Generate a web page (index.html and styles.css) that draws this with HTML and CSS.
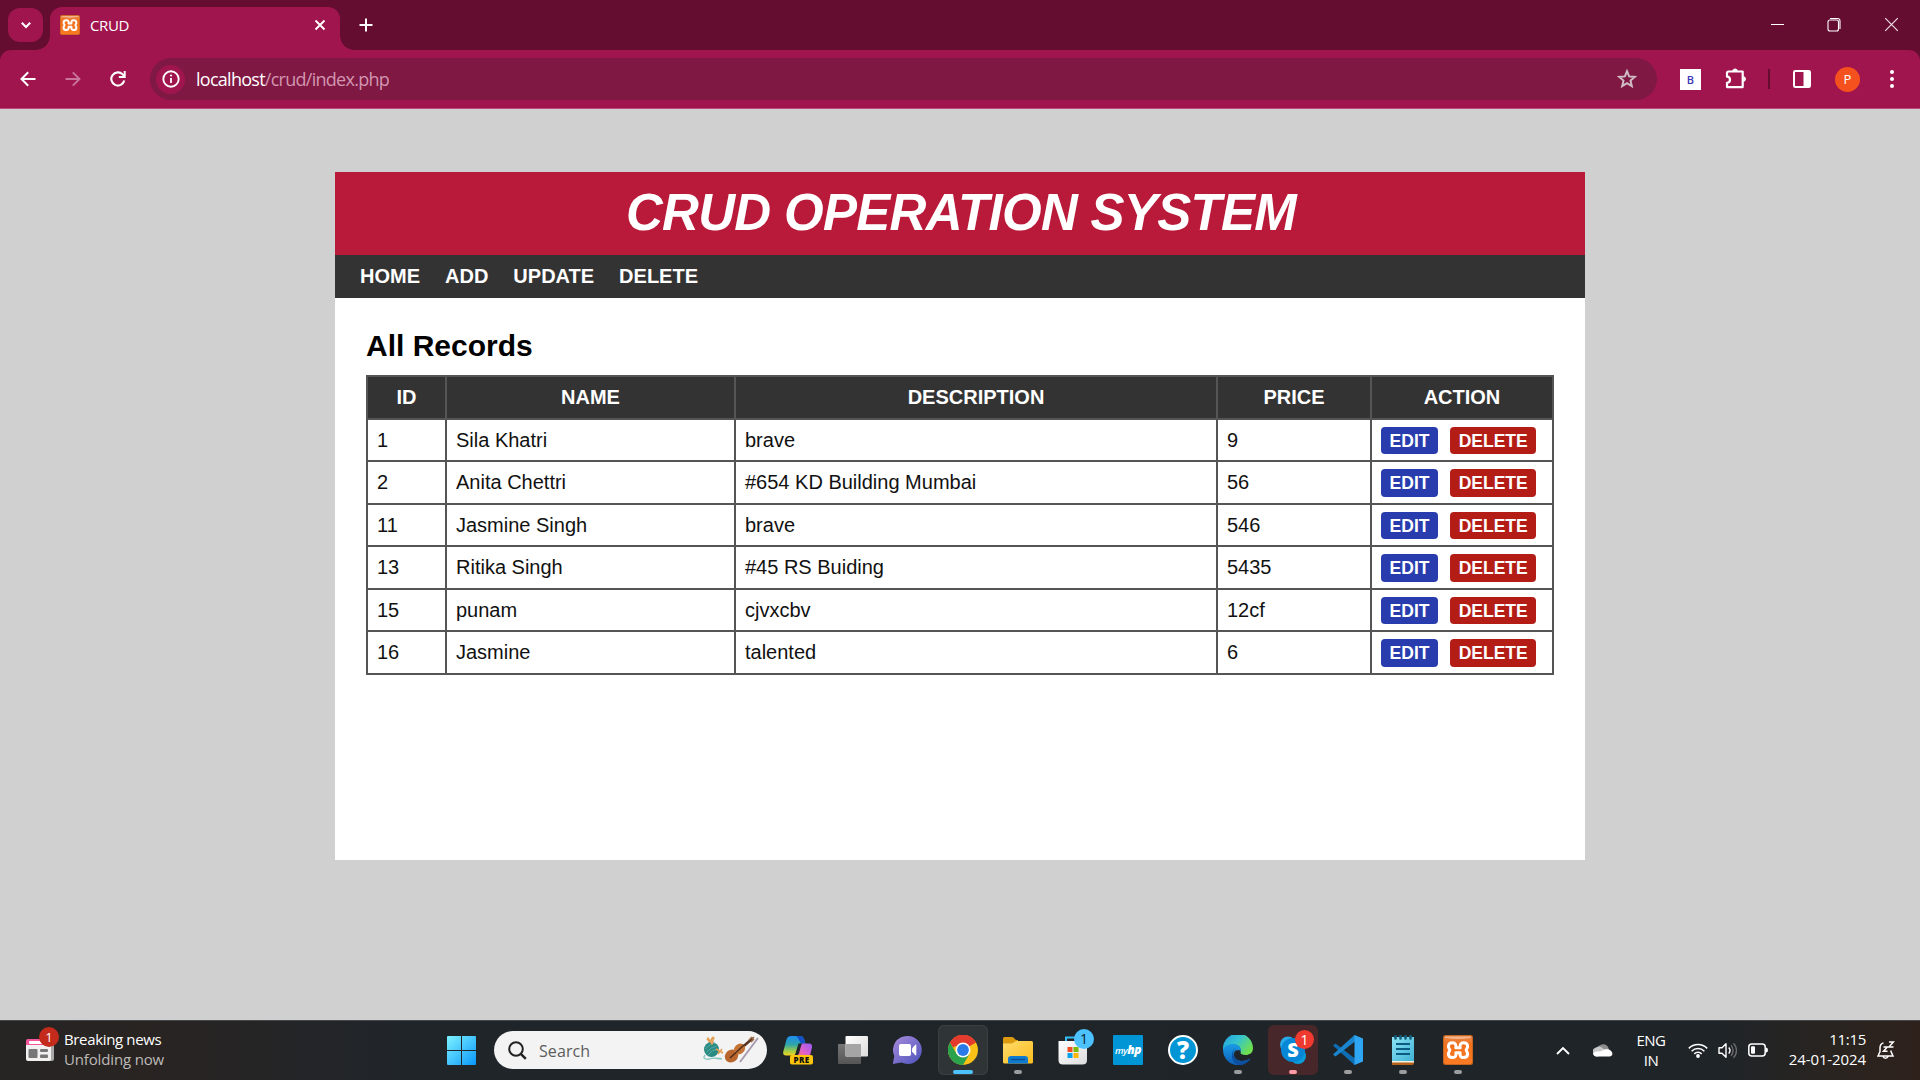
FILE: index.html
```html
<!DOCTYPE html>
<html lang="en">
<head>
<meta charset="utf-8">
<title>CRUD</title>
<link rel="stylesheet" href="styles.css">
</head>
<body>
<svg class="defs" width="0" height="0" aria-hidden="true">
  <defs>
    <linearGradient id="g-win" x1="0" y1="0" x2="1" y2="1"><stop offset="0" stop-color="#7df3ff"/><stop offset="1" stop-color="#0a96fb"/></linearGradient>
    <linearGradient id="g-orange" x1="0" y1="0" x2="0" y2="1"><stop offset="0" stop-color="#e98a4a"/><stop offset=".3" stop-color="#f0701c"/><stop offset="1" stop-color="#fb7a24"/></linearGradient>
    <linearGradient id="g-cop1" x1="0" y1="0" x2="0" y2="1"><stop offset="0" stop-color="#1c8ef0"/><stop offset=".45" stop-color="#2fa5a8"/><stop offset=".75" stop-color="#9ccb4a"/><stop offset="1" stop-color="#f4d420"/></linearGradient>
    <linearGradient id="g-cop2" x1="1" y1="0" x2="0" y2="1"><stop offset="0" stop-color="#9b5cf5"/><stop offset=".5" stop-color="#d95fd0"/><stop offset="1" stop-color="#ff7a6a"/></linearGradient>
    <linearGradient id="g-chat" x1="0" y1="0" x2="1" y2="1"><stop offset="0" stop-color="#a98bdc"/><stop offset="1" stop-color="#4b53bc"/></linearGradient>
    <linearGradient id="g-fold" x1="0" y1="0" x2="1" y2="1"><stop offset="0" stop-color="#ffdc6b"/><stop offset="1" stop-color="#fbbc1e"/></linearGradient>
    <linearGradient id="g-edge1" x1="0" y1="0" x2="1" y2=".6"><stop offset="0" stop-color="#1f9be0"/><stop offset=".5" stop-color="#35c4d0"/><stop offset="1" stop-color="#6fe04f"/></linearGradient>
    <linearGradient id="g-edge2" x1="0" y1="0" x2="0" y2="1"><stop offset="0" stop-color="#1a9de6"/><stop offset="1" stop-color="#0d5db8"/></linearGradient>
    <linearGradient id="g-note" x1="0" y1="0" x2="1" y2="1"><stop offset="0" stop-color="#8ce4f4"/><stop offset="1" stop-color="#3fb2d4"/></linearGradient>
    <linearGradient id="g-white" x1="0" y1="0" x2="1" y2="1"><stop offset="0" stop-color="#fff"/><stop offset="1" stop-color="#dcdcdc"/></linearGradient>
    <linearGradient id="g-gray" x1="0" y1="0" x2="0" y2="1"><stop offset="0" stop-color="#777"/><stop offset="1" stop-color="#555"/></linearGradient>
    <symbol id="xampp" viewBox="0 0 30 30">
      <rect width="30" height="30" rx="2.5" fill="#c4641d"/>
      <rect x="1" y="1" width="28" height="28" rx="2" fill="url(#g-orange)"/>
      <path d="M2 1.600h26v1.200q-13 2.400-26 0z" fill="#f2b48c"/>
      <path d="M15 12.800H12.800C13.600 9.500 12 7.800 9.800 7.800C7 7.800 5.400 9.300 5.400 11.500C5.400 13.300 6.800 13.800 6.800 15C6.800 16.300 5.400 17 5.400 19C5.400 21.300 7 22.600 9.500 22.600C12 22.600 13.600 20.800 12.800 17.800H17.200C16.400 20.800 18 22.600 20.500 22.600C23 22.600 24.600 21.300 24.600 19C24.600 17 23.200 16.300 23.200 15C23.200 13.800 24.600 13.300 24.600 11.500C24.600 9.300 23 7.800 20.200 7.800C18 7.800 16.400 9.500 17.200 12.800z" fill="none" stroke="#fff" stroke-width="3" stroke-linejoin="round"/>
    </symbol>
  </defs>
</svg>

<header class="browser">
  <div class="tabstrip">
    <button class="tab-search" aria-label="Search tabs"><svg width="12" height="12" viewBox="0 0 12 12"><path d="M1.800 3.700 6 8l4.200-4.300" fill="none" stroke="#fff" stroke-width="2"/></svg></button>
    <div class="tab">
      <svg class="favicon" width="20" height="20"><use href="#xampp"/></svg>
      <span class="tab-title">CRUD</span>
      <svg class="tab-close" width="12" height="12" viewBox="0 0 12 12"><path d="M1.500 1.500l9 9M10.500 1.500l-9 9" stroke="#fff" stroke-width="1.900"/></svg>
    </div>
    <svg class="new-tab" width="14" height="14" viewBox="0 0 14 14"><path d="M7 .5v13M.5 7h13" stroke="#fff" stroke-width="2"/></svg>
    <div class="window-controls">
      <svg width="15" height="15" viewBox="0 0 15 15"><path d="M1 7.500h13" stroke="#fff"/></svg>
      <svg width="15" height="15" viewBox="0 0 15 15"><rect x="1" y="3" width="10.500" height="11" rx="2" fill="none" stroke="#fff" stroke-width="1.100"/><path d="M3 1.500h7.500q2.500 0 2.500 2.500v8" fill="none" stroke="#fff" stroke-width="1.100"/></svg>
      <svg width="15" height="15" viewBox="0 0 15 15"><path d="M1.200 1.200l12.600 12.600M13.800 1.200L1.200 13.800" stroke="#f0dde5" stroke-width="1.200"/></svg>
    </div>
  </div>
  <div class="toolbar">
    <div class="nav-buttons">
      <svg width="16" height="16" viewBox="0 0 16 16"><path d="M15.500 8H2M8.200 1.300 1.500 8l6.700 6.700" fill="none" stroke="#fff" stroke-width="2"/></svg>
      <svg width="16" height="16" viewBox="0 0 16 16"><path d="M.5 8H14M7.800 1.300 14.500 8l-6.700 6.700" fill="none" stroke="#c9759a" stroke-width="1.900"/></svg>
      <svg width="16" height="16" viewBox="0 0 16 16"><path d="M14.300 9.600A6.600 6.600 0 1 1 12.700 3.400L14.500 5.300" fill="none" stroke="#fff" stroke-width="2.100"/><path d="M15.700 0v7H8.800V5h4.900V0z" fill="#fff"/></svg>
    </div>
    <div class="omnibox">
      <span class="site-info"><svg width="18" height="18" viewBox="0 0 18 18"><circle cx="9" cy="9" r="7.700" fill="none" stroke="#fff" stroke-width="1.900"/><path d="M9 8v5" stroke="#fff" stroke-width="1.800"/><circle cx="9" cy="5.500" r="1.100" fill="#fff"/></svg></span>
      <span class="url"><b>localhost</b>/crud/index.php</span>
      <svg class="star" width="20" height="20" viewBox="0 0 20 20"><path d="M10 2.200l2.100 5.200 5.700.5-4.300 3.700 1.300 5.500-4.800-2.900-4.800 2.900 1.300-5.500-4.300-3.700 5.700-.5z" fill="none" stroke="#d0bcc5" stroke-width="2"/></svg>
    </div>
    <div class="extensions">
      <span class="ext-b">B</span>
      <svg class="puzzle" width="22" height="22" viewBox="0 0 22 22"><path d="M3.500 3.500h14.200v15.600H2v-4.200c4-.3 4-6 0-6.200V5q0-1.500 1.500-1.500z" fill="none" stroke="#fff" stroke-width="2.200" stroke-linejoin="round"/><path d="M7.300 3c.4-3.400 5.200-3.400 5.600 0zM18.300 8.300c3.500.4 3.500 5.200 0 5.600z" fill="#fff"/></svg>
      <span class="divider"></span>
      <svg class="side-panel" width="18" height="18" viewBox="0 0 18 18"><rect x="1" y="1" width="16" height="16" rx="1.300" fill="none" stroke="#fff" stroke-width="2"/><path d="M10.500 1H17v16h-6.500z" fill="#fff"/></svg>
      <span class="avatar">P</span>
      <svg class="menu" width="4" height="18" viewBox="0 0 4 18"><g fill="#fff"><circle cx="2" cy="2" r="2"/><circle cx="2" cy="9" r="2"/><circle cx="2" cy="16" r="2"/></g></svg>
    </div>
  </div>
</header>

<main class="page">
  <div class="wrapper">
    <h1 class="banner">CRUD OPERATION SYSTEM</h1>
    <nav class="menu-bar"><a>HOME</a><a>ADD</a><a>UPDATE</a><a>DELETE</a></nav>
    <section class="content">
      <h2>All Records</h2>
      <table class="records">
        <colgroup><col class="c-id"><col class="c-name"><col class="c-desc"><col class="c-price"><col class="c-action"></colgroup>
        <thead><tr class="tall"><th>ID</th><th>NAME</th><th>DESCRIPTION</th><th>PRICE</th><th>ACTION</th></tr></thead>
        <tbody>
          <tr><td>1</td><td>Sila Khatri</td><td>brave</td><td>9</td><td><div class="actions"><a class="btn edit">EDIT</a><a class="btn delete">DELETE</a></div></td></tr>
          <tr class="tall"><td>2</td><td>Anita Chettri</td><td>#654 KD Building Mumbai</td><td>56</td><td><div class="actions"><a class="btn edit">EDIT</a><a class="btn delete">DELETE</a></div></td></tr>
          <tr><td>11</td><td>Jasmine Singh</td><td>brave</td><td>546</td><td><div class="actions"><a class="btn edit">EDIT</a><a class="btn delete">DELETE</a></div></td></tr>
          <tr class="tall"><td>13</td><td>Ritika Singh</td><td>#45 RS Buiding</td><td>5435</td><td><div class="actions"><a class="btn edit">EDIT</a><a class="btn delete">DELETE</a></div></td></tr>
          <tr><td>15</td><td>punam</td><td>cjvxcbv</td><td>12cf</td><td><div class="actions"><a class="btn edit">EDIT</a><a class="btn delete">DELETE</a></div></td></tr>
          <tr class="tall"><td>16</td><td>Jasmine</td><td>talented</td><td>6</td><td><div class="actions"><a class="btn edit">EDIT</a><a class="btn delete">DELETE</a></div></td></tr>
        </tbody>
      </table>
    </section>
  </div>
</main>

<footer class="taskbar">
  <div class="news">
    <div class="news-icon">
      <svg width="28" height="22" viewBox="0 0 28 22"><rect x="4" y="2" width="24" height="20" rx="2" fill="#a8a8a8"/><path d="M0 6V2q0-2 2-2h22v6z" fill="#f5559b"/><path d="M0 6h25v14q0 2-2 2H2q-2 0-2-2z" fill="#f1f1f1"/><rect x="3" y="2" width="19" height="3" rx="1" fill="#fff"/><rect x="2.500" y="10" width="9" height="9" rx="1" fill="#777"/><rect x="14" y="10" width="8" height="3" rx="1" fill="#777"/><rect x="14" y="15.500" width="8" height="3.500" rx="1" fill="#777"/></svg>
      <span class="news-badge">1</span>
    </div>
    <div class="news-text"><span>Breaking news</span><span class="sub">Unfolding now</span></div>
  </div>

  <div class="dock">
    <div class="app start"><svg width="29" height="29" viewBox="0 0 29 29"><path d="M1 0h13v14H0V1q0-1 1-1zM15 0h13q1 0 1 1v13H15zM0 15h14v14H1q-1 0-1-1zM15 15h14v13q0 1-1 1H15z" fill="url(#g-win)"/></svg></div>
    <div class="search">
      <svg width="19" height="19" viewBox="0 0 19 19"><circle cx="8" cy="8" r="6.800" fill="none" stroke="#222" stroke-width="2"/><path d="M12.800 12.800l5 5" stroke="#222" stroke-width="2.500"/></svg>
      <span>Search</span>
      <svg class="doodle" width="56" height="30" viewBox="0 0 56 30">
        <path d="M4 3.500 16 18M10 2 3 14" stroke="#e0984a" stroke-width="1.700"/>
        <circle cx="8.500" cy="14.500" r="7.500" fill="#2b8b83"/><path d="M2.500 14q5-6 9.500-5.500M3.500 17q5-5 10-6M5 20q4-6 10-6" fill="none" stroke="#62b8ae" stroke-width=".8"/>
        <path d="M4.500 2.500l5 7M11 2l-2 7M13 14l7 4M15 19l4-5" stroke="#e5a257" stroke-width="1.600"/>
        <path d="M2 20q-3 4 3 4.300 5-1.500 8-1t6 .5" fill="none" stroke="#84c6be" stroke-width="1.400"/>
        <path d="M35 16 50 3" stroke="#59331f" stroke-width="2.600"/><path d="M46 5l3-3M48 7l3-3M49 4l2-2" stroke="#9a6b4a" stroke-width="1.600"/>
        <ellipse cx="28.500" cy="21" rx="7" ry="6.200" transform="rotate(-40 28.500 21)" fill="#b8662d"/><ellipse cx="36.500" cy="14" rx="6" ry="5" transform="rotate(-40 36.500 14)" fill="#c47436"/>
        <path d="M27 23 41 10" stroke="#4e2c1a" stroke-width="1.500"/>
        <path d="M37 27 55 3" stroke="#a698ad" stroke-width="1.800"/>
      </svg>
    </div>

    <div class="apps">
      <div class="app"><svg width="30" height="30" viewBox="0 0 30 30"><path d="M13 1h4q3 0 4 3l1.500 4.500H19q-2.500 0-3.500 2.500l-2.500 7.500Q12 20.500 9 20.500H3q-3.500 0-2.700-4L3.500 4.500Q4.500 1 8 1z" fill="url(#g-cop1)"/><path d="M13 1h4q3 0 4 3l1.500 4.500H18l-2-3.500q-1-3-3-4z" fill="#1450c8"/><path d="M15.500 8.500H20l-4 11.500h-4z" fill="#20252a"/><path d="M19.500 8.500H26q3.500 0 3 4l-2 8-1 2H13l3-4 2-7.500q.5-2.500 1.500-2.500z" fill="url(#g-cop2)"/><rect x="7" y="20" width="23" height="9.500" rx="2" fill="#fcc50a"/></svg><span class="pre">PRE</span></div>
      <div class="app"><svg width="30" height="30" viewBox="0 0 30 30"><rect y="9" width="23" height="20" rx="1" fill="url(#g-gray)"/><rect x="7.500" y="1" width="22.500" height="20.500" rx="1" fill="url(#g-white)"/><path d="M7.500 9H23v12.500H7.500z" fill="#a5a5a5"/></svg></div>
      <div class="app chat"><svg width="30" height="30" viewBox="0 0 30 30"><path d="M15.500 1a14 14 0 1 1-6 26.500L.8 29l1.500-8A14 14 0 0 1 15.500 1z" fill="url(#g-chat)"/><rect x="7" y="9" width="12" height="12" rx="1.800" fill="#fff"/><path d="M20 13.500l3.500-4q.8 0 .8 1v9q0 1-.8 1l-3.500-4z" fill="#fff"/></svg></div>
      <div class="app active"><svg width="30" height="30" viewBox="0 0 30 30"><circle cx="15" cy="15" r="15" fill="#fbc116"/><path d="M15 15 2 7.500A15 15 0 0 1 28 7.500z" fill="#e33b2e"/><path d="M15 7.500h13A15 15 0 0 0 2 7.500l3 5z" fill="#e33b2e"/><path d="M2 7.500A15 15 0 0 0 15 30l6.500-11.200L15 15 8.500 18.700z" fill="#2ba24c"/><circle cx="15" cy="15" r="7.500" fill="#fff"/><circle cx="15" cy="15" r="5.900" fill="#2a7be8"/></svg><i class="bar wide"></i></div>
      <div class="app"><svg width="30" height="30" viewBox="0 0 30 30"><path d="M0 3.500Q0 2 1.500 2H9q1 0 1.700.8L13 5H0z M0 5h15v5H0z" fill="#dc9a0e"/><path d="M0 8.500h9l4-2.500h15.500Q30 6 30 7.500v19.500q0 1.500-1.500 1.500h-27Q0 28.500 0 27z" fill="url(#g-fold)"/><path d="M5 28.500V24q0-3 3-3h14q3 0 3 3v4.500z" fill="#0f7bd0"/><path d="M8.500 24.500h13" stroke="#0a4f93" stroke-width="1.300" stroke-linecap="round"/></svg><i class="bar"></i></div>
      <div class="app"><svg width="30" height="30" viewBox="0 0 30 30"><path d="M8 9V2.500h14V9" fill="none" stroke="#33bdf5" stroke-width="2"/><path d="M.5 6H29v19q0 4.500-4.500 4.500H5Q.5 29.500.5 25z" fill="url(#g-white)"/><path d="M9.500 12h5v5h-5z" fill="#f04e23"/><path d="M15.500 12h5v5h-5z" fill="#7db90c"/><path d="M9.500 18h5v5h-5z" fill="#06a3ec"/><path d="M15.500 18h5v5h-5z" fill="#fdb70c"/></svg><span class="badge blue">1</span></div>
      <div class="app"><span class="myhp">my<b>hp</b></span></div>
      <div class="app"><span class="help">?</span></div>
      <div class="app"><svg width="30" height="30" viewBox="0 0 30 30"><path d="M0 14A15 15 0 0 1 30 13C30 18 26.500 20 22.500 20c-3.500 0-6-1-5-3C18.500 13 15.500 9.500 11 9.500 6 9.500 2 12 0 15z" fill="url(#g-edge1)"/><path d="M0 15.500C.5 11 5.500 8.500 11 9c5 .5 8 4 6.500 8C13 13 10.500 17 11 20.500 12 26 20 28 27.500 23.500A15 15 0 0 1 0 15.500z" fill="url(#g-edge2)"/><path d="M13.500 12.500Q9 15 10.500 20.500C12.500 26.500 20 27.500 27.500 23.500 25 28 20 30 15.500 30 8 28.500 6.500 15.500 13.500 12.500z" fill="#0d50a0"/><path d="M15.500 15q2 0 2 2-.5 2 1 3.500 4 3 9 .5l.5 1.500q-8 3.500-12.500-1-2-3.500 0-6.500z" fill="#20252a"/></svg><i class="bar"></i></div>
      <div class="app alert"><svg width="30" height="30" viewBox="0 0 30 30"><circle cx="10" cy="9.500" r="8" fill="#2aaae8"/><circle cx="20" cy="21" r="8" fill="#0a9bd8"/><circle cx="15" cy="15" r="12" fill="#0787d6"/></svg><span class="skype">S</span><span class="badge red">1</span><i class="bar pink"></i></div>
      <div class="app"><svg width="30" height="30" viewBox="0 0 30 30"><path d="M0 10.500 2.500 8.500 22 23.500V30h-.5z" fill="#0f6db3"/><path d="M0 19.500 2.500 21.500 22 6.500V0h-.5z" fill="#1a86cf"/><path d="M21.500 0 30 3.500v23L21.500 30z" fill="#2fa6f4"/></svg><i class="bar"></i></div>
      <div class="app"><svg width="30" height="30" viewBox="0 0 30 30"><path d="M4 24h22v4q0 2-2 2H4z" fill="#b5621c"/><path d="M4 26h22v1.500H4z" fill="#f5efe4"/><path d="M4 2h22v24H4z" fill="url(#g-note)"/><path d="M8 9h14M8 14h14M8 19h14" stroke="#0b5a80" stroke-width="1.900"/><path d="M7.500 1v2.500M12.500 1v2.500M17.500 1v2.500M22.500 1v2.500" stroke="#125d7c" stroke-width="2.600" stroke-linecap="round"/></svg><i class="bar"></i></div>
      <div class="app"><svg width="30" height="30"><use href="#xampp"/></svg><i class="bar"></i></div>
    </div>
  </div>

  <div class="tray">
    <svg width="14" height="9" viewBox="0 0 14 9"><path d="M1 8l6-6 6 6" fill="none" stroke="#fff" stroke-width="1.900"/></svg>
    <svg class="cloud" width="20" height="14" viewBox="0 0 20 14"><path d="M4 7a6 6 0 0 1 11.500-2L17 9z" fill="#8d8d8d"/><path d="M4.500 13.500A4.500 4.500 0 0 1 2 5q4-3 7.500 0l7 5z" fill="#c9c9c9"/><path d="M3.500 13.500Q0 13 .5 10 3 7.500 7 8.500L13 6q4 0 5.500 2.500 2.500 3.500-1.500 5z" fill="#fff"/></svg>
    <div class="lang"><span>ENG</span><span>IN</span></div>
    <div class="status">
      <svg width="20" height="16" viewBox="0 0 20 16"><g fill="none" stroke="#fff" stroke-width="1.500"><path d="M.8 6.400a13 13 0 0 1 18.400 0M3.600 9.200a9 9 0 0 1 12.800 0M6.300 11.900a5.200 5.200 0 0 1 7.400 0"/></g><circle cx="10" cy="14" r="1.900" fill="#fff"/></svg>
      <svg width="20" height="17" viewBox="0 0 20 17"><path d="M1 5.700h3l4-4v13.600l-4-4H1z" fill="none" stroke="#fff" stroke-width="1.400" stroke-linejoin="round"/><path d="M10.700 5.500a4.500 4.500 0 0 1 0 6" fill="none" stroke="#fff" stroke-width="1.400"/><path d="M13 3.300a7.500 7.500 0 0 1 0 10.400M15.500 1.200a10.500 10.500 0 0 1 0 14.600" fill="none" stroke="#6b6e70" stroke-width="1.300"/></svg>
      <svg width="20" height="14" viewBox="0 0 20 14"><rect x=".8" y="1" width="16.400" height="12" rx="3" fill="none" stroke="#fff" stroke-width="1.500"/><rect x="3" y="3.200" width="4" height="7.600" rx="1" fill="#fff"/><path d="M18 4.500q2 0 2 2.500t-2 2.500z" fill="#fff"/></svg>
    </div>
    <div class="clock"><span>11:15</span><span class="date">24-01-2024</span></div>
    <svg class="bell" width="18" height="20" viewBox="0 0 18 20"><path d="M6.500 2.900Q3 4 3 8v3.500L1 16h15l-2-4.500V10.500M6 16.500a2.700 2.700 0 0 0 5 0" fill="none" stroke="#fff" stroke-width="1.500"/><path d="M6.500 7h3.800l-3.800 4.300h4M12 2h4.300L12 7h4.500" fill="none" stroke="#fff" stroke-width="1.500"/></svg>
  </div>
</footer>
</body>
</html>
```
FILE: styles.css
```css
* { box-sizing: border-box; }
html, body { margin: 0; height: 100%; }
body {
  display: flex;
  flex-direction: column;
  height: 1080px;
  overflow: hidden;
  background: #d0d0d0;
  font-family: "Liberation Sans", Arial, sans-serif;
}
svg { display: block; flex: none; }
.defs { position: absolute; }

/* Browser chrome */
.browser { flex: none; background: #640d31; font-family: "Open Sans", "Noto Sans", sans-serif; color: #fff; }
.tabstrip { display: flex; height: 50px; padding: 7px 0 0 8px; align-items: flex-start; }
.tab-search {
  display: flex; align-items: center; justify-content: center;
  width: 35px; height: 34px; margin: 1px 7px 0 0; padding: 0;
  border: 0; border-radius: 12px; background: #a0154e;
}
.tab {
  position: relative; display: flex; align-items: center;
  width: 290px; height: 43px; padding: 0 14px 7px 10px;
  border-radius: 12px 12px 0 0; background: #a0154e;
}
.tab::before, .tab::after { content: ""; position: absolute; bottom: 0; width: 14px; height: 14px; }
.tab::before { left: -14px; background: radial-gradient(circle at 0 0, transparent 13.500px, #a0154e 14px); }
.tab::after { right: -14px; background: radial-gradient(circle at 100% 0, transparent 13.500px, #a0154e 14px); }
.tab-title { margin-left: 10px; font-size: 15px; letter-spacing: -.4px; flex: 1; }
.new-tab { margin: 11px 0 0 19px; }
.window-controls { display: flex; gap: 42px; margin: 10px 21px 0 auto; }
.toolbar {
  display: flex; align-items: center; height: 59px; padding: 0 21px 0 20px;
  border-radius: 11px 11px 0 0; border-bottom: 1px solid #bd4a78; background: #a0154e;
}
.nav-buttons { display: flex; gap: 29px; margin-right: 24px; }
.omnibox { display: flex; align-items: center; width: 1507px; height: 42px; padding: 0 20px 0 6px; border-radius: 21px; background: #7f1843; }
.site-info { display: flex; align-items: center; justify-content: center; width: 29px; height: 29px; border-radius: 50%; background: #a0154e; }
.url { flex: 1; margin-left: 11px; color: #d296b0; font-size: 18px; letter-spacing: -.73px; }
.url b { color: #fff; font-weight: 400; }
.extensions { display: flex; align-items: center; flex: 1; }
.ext-b {
  display: flex; align-items: center; justify-content: center; width: 21px; height: 21px; margin-left: 23px;
  background: #fff; color: #3a35b4; font-size: 11px; font-weight: 600;
}
.puzzle { margin-left: 24px; }
.divider { width: 2px; height: 20px; margin-left: 21px; background: #640d31; }
.side-panel { margin-left: 23px; }
.avatar {
  display: flex; align-items: center; justify-content: center; width: 25px; height: 25px; margin-left: 24px;
  border-radius: 50%; background: #f4511e; font-size: 13px;
}
.extensions .menu { margin-left: 30px; }

/* Web page */
.page { flex: 1; padding-top: 63px; }
.wrapper { width: 1250px; height: 688px; margin: 0 auto; background: #fff; }
.banner {
  margin: 0; height: 83px; padding-left: 2px; background: #ba1a39; color: #fff;
  font-size: 51px; font-style: italic; line-height: 82px; letter-spacing: -.7px; text-align: center;
}
.menu-bar { display: flex; gap: 25px; height: 43px; padding: 0 25px; background: #333; color: #fff; font-size: 20px; font-weight: 700; line-height: 42px; }
.content { padding: 30px 31px 0; }
.content h2 { margin: 0 0 12px; font-size: 30px; line-height: 35px; color: #000; }
.records { width: 1188px; border-collapse: collapse; table-layout: fixed; font-size: 20px; line-height: 24px; color: #111; }
.records th, .records td { padding: 0 9px; border: 2px solid #555; text-align: left; }
.records th { background: #333; color: #fff; text-align: center; }
.records .tall th, .records .tall td { padding-bottom: 2px; }
.records .tall td:last-child { padding-bottom: 0; }
.records tr { height: 42px; }
.records tr.tall { height: 43px; }
.c-id { width: 79px; }
.c-name { width: 289px; }
.c-desc { width: 482px; }
.c-price { width: 154px; }
.c-action { width: 182px; }
.actions { display: flex; gap: 12px; padding-top: 1px; }
.btn { height: 27.500px; padding: 0 8.600px; border-radius: 4px; color: #fff; font-size: 17.500px; font-weight: 700; line-height: 28.500px; }
.edit { background: #283cae; }
.delete { background: #b41c16; }

/* Taskbar */
.taskbar {
  display: flex; align-items: center; flex: none; height: 60px; box-shadow: inset 0 1px #43474a;
  background: linear-gradient(90deg, #262524 0, #292422 150px, #20252a 400px, #1f2428 1720px, #292420 1830px, #2e211c 1920px);
  color: #fff; font-family: "Open Sans", "Noto Sans", sans-serif; font-size: 15px;
}
.news { display: flex; width: 436px; padding-left: 26px; align-items: center; }
.news-icon { position: relative; }
.news-badge {
  position: absolute; left: 13px; top: -12px; width: 20px; height: 20px; border-radius: 50%;
  background: #c42b1c; font-size: 13px; line-height: 20px; text-align: center;
}
.news-text { display: flex; flex-direction: column; margin-left: 10px; padding-bottom: 2px; line-height: 20px; font-size: 15px; letter-spacing: -.35px; }
.news-text .sub { color: #bdbab8; letter-spacing: -.15px; }
.dock { display: flex; align-items: center; width: 1120px; }
.app { position: relative; display: flex; align-items: center; justify-content: center; width: 50px; height: 50px; border-radius: 6px; flex: none; }
.app.start { padding-top: 1px; }
.app.chat { padding-right: 2px; }
.app.active { background: #2f3437; box-shadow: inset 0 0 0 1px #3a3f42; }
.app.alert { background: #472729; }
.apps { display: flex; gap: 5px; margin-left: 6px; }
.bar { position: absolute; left: 50%; bottom: 1px; width: 8px; height: 4px; margin-left: -4px; border-radius: 2px; background: #9a9c9e; }
.bar.wide { width: 20px; margin-left: -10px; background: #4cc2ff; }
.bar.pink { background: #ff99a4; }
.search {
  display: flex; align-items: center; width: 273px; height: 38px; margin-left: 8px; padding: 0 8px 0 14px;
  border-radius: 19px; background: #f3f3f3; color: #5c5c5c; font-size: 16px;
}
.search span { margin-left: 12px; padding-top: 1px; letter-spacing: .1px; }
.doodle { margin-left: auto; }
.pre { position: absolute; left: 17px; top: 30px; width: 23px; color: #111; font-size: 8px; font-weight: 800; line-height: 10px; letter-spacing: .4px; text-align: center; }
.badge { position: absolute; left: 26px; top: 4px; width: 20px; height: 20px; border-radius: 50%; font-size: 14px; line-height: 20px; text-align: center; }
.badge.blue { background: #4cc2ff; color: #10222c; }
.badge.red { left: 27px; top: 5px; width: 19px; height: 19px; line-height: 19px; background: #f03a2f; }
.myhp { width: 30px; height: 30px; background: #0096d6; border-radius: 1px; font-size: 9.500px; font-style: italic; font-weight: 600; line-height: 29px; text-align: center; letter-spacing: -.5px; }
.myhp b { font-size: 12px; }
.help { width: 30px; height: 30px; border: 2px solid #fff; border-radius: 50%; background: #0096d6; font-size: 24px; font-weight: 800; line-height: 26px; text-align: center; }
.skype { position: absolute; left: 0; top: 14px; width: 50px; font-size: 20px; font-weight: 800; line-height: 22px; text-align: center; }
.tray { display: flex; align-items: center; flex: 1; }
.cloud { margin-left: 23px; }
.lang { display: flex; flex-direction: column; width: 34px; margin-left: 21px; text-align: center; font-size: 15px; line-height: 20px; letter-spacing: -.5px; }
.status { display: flex; align-items: center; gap: 10px; margin-left: 20px; }
.clock { display: flex; flex-direction: column; width: 86px; margin-left: 12px; padding-bottom: 2px; text-align: right; font-size: 15px; line-height: 20px; letter-spacing: -.3px; }
.clock .date { letter-spacing: -.1px; }
.bell { margin-left: 11px; }
```
